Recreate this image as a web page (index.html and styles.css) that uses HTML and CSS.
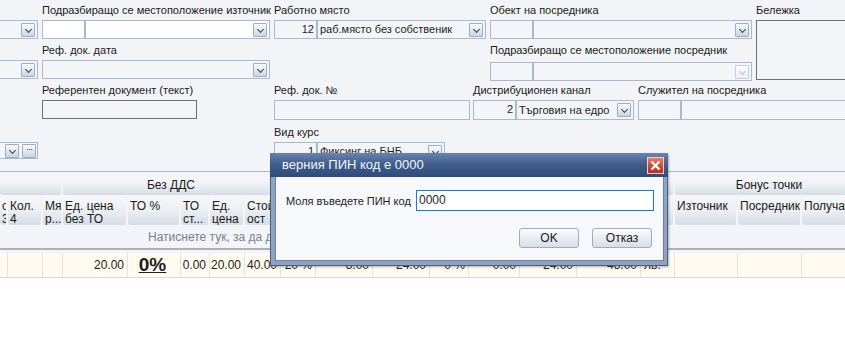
FILE: index.html
```html
<!DOCTYPE html>
<html lang="bg">
<head>
  <meta charset="UTF-8">
  <title>Документ</title>
  <link rel="stylesheet" href="styles.css">
</head>
<body>
  <div class="form">
    <!-- лява колона (отрязана) -->
    <div class="fld a1"><div class="lbl"></div><div class="ctl"><span class="grow"></span><span class="dd"></span></div></div>
    <div class="fld a2"><div class="lbl"></div><div class="ctl"><span class="grow"></span><span class="dd"></span></div></div>
    <div class="fld a4"><div class="lbl"></div><div class="ctl"><span class="grow"></span><span class="dd"></span><span class="dots">&middot;&middot;&middot;</span></div></div>

    <div class="fld b1">
      <div class="lbl">Подразбиращо се местоположение източник</div>
      <div class="ctl white"><span class="num"></span><span class="grow"></span><span class="dd"></span></div>
    </div>
    <div class="fld b2">
      <div class="lbl">Реф. док. дата</div>
      <div class="ctl"><span class="grow"></span><span class="dd"></span></div>
    </div>
    <div class="fld b3">
      <div class="lbl">Референтен документ (текст)</div>
      <div class="ctl dark short"></div>
    </div>

    <div class="fld c1">
      <div class="lbl">Работно място</div>
      <div class="ctl"><span class="num">12</span><span class="grow">раб.място без собственик</span><span class="dd"></span></div>
    </div>
    <div class="fld c3">
      <div class="lbl">Реф. док. №</div>
      <div class="ctl"></div>
    </div>
    <div class="fld c4">
      <div class="lbl">Вид курс</div>
      <div class="ctl kurs"><span class="num">1</span><span class="grow">Фиксинг на БНБ</span><span class="dd"></span></div>
    </div>

    <div class="fld d1">
      <div class="lbl">Обект на посредника</div>
      <div class="ctl"><span class="num"></span><span class="grow"></span><span class="dd"></span></div>
    </div>
    <div class="fld d2">
      <div class="lbl">Подразбиращо се местоположение посредник</div>
      <div class="ctl"><span class="num"></span><span class="grow"></span><span class="dd off"></span></div>
    </div>
    <div class="fld d3">
      <div class="lbl">Дистрибуционен канал</div>
      <div class="ctl"><span class="num">2</span><span class="grow">Търговия на едро</span><span class="dd"></span></div>
    </div>
    <div class="fld d4">
      <div class="lbl">Служител на посредника</div>
      <div class="ctl"><span class="num"></span><span class="grow"></span></div>
    </div>

    <div class="fld note">
      <div class="lbl">Бележка</div>
      <div class="ctl dark memo"></div>
    </div>
  </div>

  <div class="grid">
    <div class="band">
      <div class="grp" style="width:63px"></div>
      <div class="grp" style="width:218px">Без ДДС</div>
      <div class="grp" style="width:197px"></div>
      <div class="grp" style="width:197px"></div>
      <div class="grp" style="width:190px">Бонус точки</div>
    </div>
    <div class="heads cols">
      <div class="hd">о<br>3</div>
      <div class="hd">Кол.<br>4</div>
      <div class="hd">Мя<br>р...</div>
      <div class="hd">Ед. цена<br>без ТО</div>
      <div class="hd">ТО %</div>
      <div class="hd">ТО<br>ст...</div>
      <div class="hd">Ед.<br>цена</div>
      <div class="hd">Стой<br>ост</div>
      <div class="hd"></div>
      <div class="hd"></div>
      <div class="hd"></div>
      <div class="hd"></div>
      <div class="hd"></div>
      <div class="hd"></div>
      <div class="hd"></div>
      <div class="hd"></div>
      <div class="hd">Източник</div>
      <div class="hd">Посредник</div>
      <div class="hd">Получател</div>
    </div>
    <div class="newrow">Натиснете тук, за да добавите нов ред</div>
    <div class="row cols">
      <div class="cell"></div>
      <div class="cell"></div>
      <div class="cell"></div>
      <div class="cell">20.00</div>
      <div class="cell big">0%</div>
      <div class="cell">0.00</div>
      <div class="cell">20.00</div>
      <div class="cell">40.00</div>
      <div class="cell">20 %</div>
      <div class="cell">8.00</div>
      <div class="cell">24.00</div>
      <div class="cell">0 %</div>
      <div class="cell">0.00</div>
      <div class="cell">24.00</div>
      <div class="cell">48.00</div>
      <div class="cell left">лв.</div>
      <div class="cell"></div>
      <div class="cell"></div>
      <div class="cell"></div>
    </div>
  </div>

  <div class="dialog">
    <div class="title">
      <span>верния ПИН код е 0000</span>
      <span class="close">
        <svg width="11" height="11" viewBox="0 0 11 11"><path d="M1.5 1.5 L9.5 9.5 M9.5 1.5 L1.5 9.5" stroke="#fff" stroke-width="2.4"/></svg>
      </span>
    </div>
    <div class="dbody">
      <div class="pinrow">
        <span class="plbl">Моля въведете ПИН код</span>
        <div class="pin">0000</div>
      </div>
      <div class="btns">
        <button class="btn">OK</button>
        <button class="btn">Отказ</button>
      </div>
    </div>
  </div>
</body>
</html>
```

FILE: styles.css
```css
body {
  margin: 0;
  background-color: #ffffff;
  font-family: 'Liberation Sans', Arial, sans-serif;
  font-size: 11px;
  color: #1e1e1e;
  width: 845px;
  height: 352px;
  overflow: hidden;
  position: relative;
}

/* верхна форма */
.form {
  display: grid;
  grid-template-columns: 38px 4px 228px 4px 196px 3px 13px 4px 144px 4px 114px 4px 89px;
  grid-template-rows: 40px 40px 42px 40px;
  height: 172px;
  background-color: #f2f4f7;
  border-bottom: 1px solid #a9b6c8;
  box-sizing: border-box;
  overflow: hidden;
}

.fld {
  min-width: 0;
}

.lbl {
  height: 20px;
  line-height: 14px;
  padding-top: 3px;
  box-sizing: border-box;
  white-space: nowrap;
  color: #202020;
}

.ctl {
  display: flex;
  align-items: center;
  height: 19px;
  border: 1px solid #aab8cb;
  background-color: #f3f5f8;
  box-sizing: border-box;
}

.ctl.white,
.ctl.white .num {
  background-color: #ffffff;
}

.ctl.dark {
  border-color: #6e6e6e;
}

.ctl.short {
  width: 155px;
}

.ctl.kurs {
  width: 171px;
}

.ctl.memo {
  height: 60px;
  width: 100px;
}

.num {
  width: 43px;
  height: 100%;
  border-right: 2px solid #aab8cb;
  text-align: right;
  padding-right: 2px;
  line-height: 17px;
  box-sizing: border-box;
  flex-shrink: 0;
}

.grow {
  flex: 1;
  padding-left: 2px;
  white-space: nowrap;
  overflow: hidden;
  line-height: 17px;
}

.dd,
.dots {
  width: 14px;
  height: 14px;
  margin-right: 2px;
  border: 1px solid #9caec6;
  border-radius: 1px;
  background: linear-gradient(#fbfcfd, #e2e7ee 55%, #cdd5e1);
  box-sizing: border-box;
  flex-shrink: 0;
  position: relative;
}

.dd::after {
  content: '';
  position: absolute;
  left: 4px;
  top: 3px;
  width: 4px;
  height: 4px;
  border-right: 1px solid #3a4250;
  border-bottom: 1px solid #3a4250;
  transform: rotate(45deg);
}

.dd.off {
  border-color: #c4cfdd;
  background: linear-gradient(#fbfcfd, #eceff4);
}

.dd.off::after {
  border-color: #b9c2cf;
}

.dots {
  margin-left: 1px;
  font-size: 9px;
  line-height: 9px;
  text-align: center;
  letter-spacing: -1px;
  color: #333;
}

.a1 { grid-column: 1 / 2; grid-row: 1; }
.a2 { grid-column: 1 / 2; grid-row: 2; }
.a4 { grid-column: 1 / 2; grid-row: 4; }
.a1 .ctl, .a2 .ctl, .a4 .ctl { border-left: none; }
.a4 .ctl { height: 17px; }
.a4 .grow { flex: 0 0 5px; padding: 0; }
.a4 .dd { margin-right: 2px; }

.b1 { grid-column: 3 / 4; grid-row: 1; }
.b2 { grid-column: 3 / 4; grid-row: 2; }
.b3 { grid-column: 3 / 4; grid-row: 3; }

.c1 { grid-column: 5 / 8; grid-row: 1; }
.c3 { grid-column: 5 / 6; grid-row: 3; }
.c3 .ctl { height: 20px; }
.c4 { grid-column: 5 / 6; grid-row: 4; }

.d1 { grid-column: 9 / 12; grid-row: 1; }
.d2 { grid-column: 9 / 12; grid-row: 2; }
.d2 .ctl { margin-top: 2px; }
.d3 { grid-column: 7 / 10; grid-row: 3; }
.d3 .ctl { height: 20px; }
.d4 { grid-column: 11 / 14; grid-row: 3; }
.d4 .ctl { height: 20px; border-right: none; }

.note { grid-column: 13 / 14; grid-row: 1 / 3; }
.note .ctl { width: 100%; border-right: none; }

/* таблица */
.grid {
  background-color: #f2f4f7;
  padding-top: 5px;
  width: 845px;
  overflow: hidden;
}

.band {
  display: flex;
  height: 18px;
  white-space: nowrap;
}

.grp,
.hd {
  flex-shrink: 0;
  background: linear-gradient(#f7f8fa, #e9edf2 55%, #d6dce5);
  border-right: 2px solid #f2f4f7;
  border-radius: 0 0 3px 3px;
  box-sizing: border-box;
  text-align: center;
  font-size: 12px;
  line-height: 17px;
  color: #1a1a1a;
}

.cols {
  display: grid;
  grid-template-columns: 8px 35px 20px 65px 53px 29px 35px 36px 35px 57px 57px 39px 51px 57px 64px 34px 63px 64px 80px;
  width: 882px;
}

.heads {
  height: 29px;
  margin-top: 1px;
}

.hd {
  text-align: left;
  padding: 4px 0 0 2px;
  font-size: 12px;
  line-height: 13px;
  overflow: hidden;
  white-space: nowrap;
}

.heads .hd:first-child {
  text-align: right;
  padding-right: 1px;
}

.newrow {
  height: 25px;
  line-height: 24px;
  padding-left: 148px;
  font-size: 12px;
  color: #7b8089;
  border-bottom: 2px solid #a6b1c2;
  box-sizing: border-box;
}

.row {
  margin-top: 3px;
  height: 25px;
  background-color: #fffbf0;
  border-bottom: 1px solid #d8dbe0;
  box-sizing: border-box;
}

.cell {
  border-right: 1px solid #e3e3dc;
  text-align: right;
  padding-right: 3px;
  line-height: 24px;
  font-size: 12px;
  overflow: hidden;
  white-space: nowrap;
}

.cell.left {
  text-align: left;
  padding-left: 3px;
}

.cell.big {
  font-size: 19px;
  font-weight: bold;
  text-decoration: underline;
  text-align: center;
  line-height: 23px;
}

/* диалог */
.dialog {
  position: absolute;
  left: 270px;
  top: 153px;
  width: 398px;
  height: 113px;
  border: 1px solid #4c5f7e;
  border-top: none;
  background-color: #8fa3c1;
  box-sizing: border-box;
  box-shadow: 1px 1px 2px rgba(60, 70, 90, 0.4);
}

.title {
  height: 24px;
  margin: 0 -1px;
  background: linear-gradient(#6984ad, #415f8e 45%, #2f4b79);
  color: #f2f5fa;
  font-size: 13px;
  line-height: 24px;
  padding-left: 12px;
  display: flex;
  justify-content: space-between;
  align-items: center;
}

.close {
  width: 17px;
  height: 17px;
  margin-right: 4px;
  border: 1px solid #f0d0cc;
  background: linear-gradient(#ec7a68, #d54a37 50%, #b8301f);
  box-sizing: border-box;
  display: flex;
  align-items: center;
  justify-content: center;
}

.dbody {
  margin: 0 3px 4px 4px;
  height: 84px;
  background-color: #f6f8fb;
  border: 1px solid #6c80a0;
  border-top: none;
  box-sizing: border-box;
  padding: 13px 0 0 10px;
}

.pinrow {
  display: flex;
  align-items: center;
}

.plbl {
  width: 130px;
  flex-shrink: 0;
  font-size: 11px;
  white-space: nowrap;
}

.pin {
  width: 238px;
  height: 21px;
  border: 1px solid #1b79cf;
  background-color: #ffffff;
  box-sizing: border-box;
  padding-left: 2px;
  line-height: 19px;
  font-size: 12px;
}

.btns {
  display: flex;
  justify-content: flex-end;
  gap: 13px;
  margin-top: 17px;
  padding-right: 11px;
}

.btn {
  width: 60px;
  height: 20px;
  border: 1px solid #a2adbc;
  border-radius: 3px;
  background: linear-gradient(#fbfcfd, #e8ecf1 50%, #d9dee6);
  font-family: 'Liberation Sans', Arial, sans-serif;
  font-size: 12px;
  color: #1a1a1a;
  padding: 0;
}
```
